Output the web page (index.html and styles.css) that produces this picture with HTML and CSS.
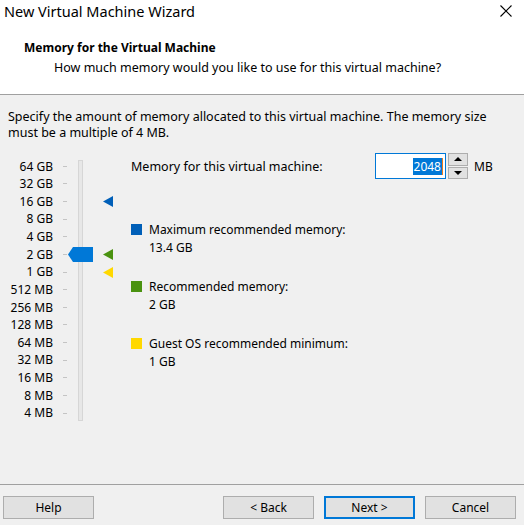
FILE: index.html
```html
<!DOCTYPE html>
<html lang="en">
<head>
    <meta charset="UTF-8">
    <title>New Virtual Machine Wizard</title>
    <link rel="stylesheet" href="styles.css">
</head>
<body>
    <div class="titlebar">
        <span class="title">New Virtual Machine Wizard</span>
        <svg class="close" width="12" height="12" viewBox="0 0 12 12">
            <path d="M0.5 0.5 L11.5 11.5 M11.5 0.5 L0.5 11.5" stroke="#000" stroke-width="1.1" fill="none"/>
        </svg>
    </div>

    <div class="header">
        <div class="heading">Memory for the Virtual Machine</div>
        <div class="subheading">How much memory would you like to use for this virtual machine?</div>
    </div>

    <div class="content">
        <p class="intro">Specify the amount of memory allocated to this virtual machine. The memory size<br>must be a multiple of 4 MB.</p>

        <div class="memory">
            <!-- scale on the left: labels, ticks, track, markers -->
            <div class="scale">
                <div class="track"></div>
                <svg class="thumb" width="25" height="15" viewBox="0 0 25 15">
                    <polygon points="0,7.5 5,0 25,0 25,15 5,15" fill="#0078d7"/>
                </svg>

                <span class="label r1">64 GB</span><span class="tick r1"></span>
                <span class="label r2">32 GB</span><span class="tick r2"></span>
                <span class="label r3">16 GB</span><span class="tick r3"></span>
                <span class="label r4">8 GB</span><span class="tick r4"></span>
                <span class="label r5">4 GB</span><span class="tick r5"></span>
                <span class="label r6">2 GB</span><span class="tick r6"></span>
                <span class="label r7">1 GB</span><span class="tick r7"></span>
                <span class="label r8">512 MB</span><span class="tick r8"></span>
                <span class="label r9">256 MB</span><span class="tick r9"></span>
                <span class="label r10">128 MB</span><span class="tick r10"></span>
                <span class="label r11">64 MB</span><span class="tick r11"></span>
                <span class="label r12">32 MB</span><span class="tick r12"></span>
                <span class="label r13">16 MB</span><span class="tick r13"></span>
                <span class="label r14">8 MB</span><span class="tick r14"></span>
                <span class="label r15">4 MB</span><span class="tick r15"></span>

                <svg class="marker r3" width="10" height="11" viewBox="0 0 10 11">
                    <polygon points="0,5.5 10,0 10,11" fill="#005fb8"/>
                </svg>
                <svg class="marker r6" width="10" height="11" viewBox="0 0 10 11">
                    <polygon points="0,5.5 10,0 10,11" fill="#4a9210"/>
                </svg>
                <svg class="marker r7" width="10" height="11" viewBox="0 0 10 11">
                    <polygon points="0,5.5 10,0 10,11" fill="#ffd800"/>
                </svg>
            </div>

            <div class="details">
                <div class="amount">
                    <span class="amount-label">Memory for this virtual machine:</span>
                    <div class="spinbox">
                        <div class="field"><span class="selected">2048</span><span class="caret"></span></div>
                        <div class="spin">
                            <div class="spin-btn"><span class="arrow up"></span></div>
                            <div class="spin-btn"><span class="arrow down"></span></div>
                        </div>
                    </div>
                    <span class="unit">MB</span>
                </div>

                <div class="legend">
                    <div class="legend-item">
                        <span class="swatch blue"></span>
                        <div class="legend-text">
                            <div>Maximum recommended memory:</div>
                            <div>13.4 GB</div>
                        </div>
                    </div>
                    <div class="legend-item">
                        <span class="swatch green"></span>
                        <div class="legend-text">
                            <div>Recommended memory:</div>
                            <div>2 GB</div>
                        </div>
                    </div>
                    <div class="legend-item">
                        <span class="swatch yellow"></span>
                        <div class="legend-text">
                            <div>Guest OS recommended minimum:</div>
                            <div>1 GB</div>
                        </div>
                    </div>
                </div>
            </div>
        </div>
    </div>

    <div class="footer">
        <button class="btn">Help</button>
        <div class="footer-right">
            <button class="btn">&lt; Back</button>
            <button class="btn btn-default">Next &gt;</button>
            <button class="btn">Cancel</button>
        </div>
    </div>
</body>
</html>
```

FILE: styles.css
```css
html, body {
    margin: 0;
    padding: 0;
}

body {
    width: 524px;
    height: 525px;
    overflow: hidden;
    display: flex;
    flex-direction: column;
    background-color: #f0f0f0;
    font-family: 'Noto Sans', 'Open Sans', sans-serif;
    font-size: 12px;
    color: #000;
}

.titlebar {
    height: 22px;
    display: flex;
    align-items: center;
    justify-content: space-between;
    padding: 0 12px 0 4px;
    background: white;
}

.title {
    font-size: 14.5px;
    line-height: 22px;
}

.close {
    display: block;
}

.header {
    background: white;
    height: 73px;
    box-sizing: border-box;
    padding-top: 18px;
    border-bottom: 1px solid #a0a0a0;
}

.heading {
    padding-left: 24px;
    font-weight: 700;
    line-height: 16px;
}

.subheading {
    padding-left: 54px;
    margin-top: 4px;
    font-size: 12.5px;
    line-height: 16px;
}

.content {
    padding: 14px 8px 0 8px;
}

.intro {
    margin: 0 0 12px 0;
    font-size: 12.5px;
    line-height: 16px;
}

.memory {
    display: flex;
    align-items: flex-start;
}

/* slider scale */
.scale {
    display: grid;
    grid-template-columns: 45px 15px 25px 22px;
    grid-template-rows: repeat(15, 17.64px);
    padding-top: 4.5px;
}

.label {
    grid-column: 1;
    text-align: right;
    line-height: 17.64px;
    white-space: nowrap;
}

.tick {
    grid-column: 2;
    align-self: center;
    justify-self: end;
    width: 4px;
    height: 1px;
    margin-right: 1px;
    background: #c4c4c4;
}

.track {
    grid-column: 3;
    grid-row: 1 / -1;
    justify-self: center;
    width: 3px;
    margin: 2px 0 1px 0;
    background: #e7e7e7;
    border: 1px solid #d6d6d6;
}

.thumb {
    grid-column: 3;
    grid-row: 6;
    align-self: center;
    display: block;
    z-index: 1;
}

.marker {
    grid-column: 4;
    align-self: center;
    justify-self: end;
    margin-right: 2px;
    display: block;
}

.r1 { grid-row: 1; }
.r2 { grid-row: 2; }
.r3 { grid-row: 3; }
.r4 { grid-row: 4; }
.r5 { grid-row: 5; }
.r6 { grid-row: 6; }
.r7 { grid-row: 7; }
.r8 { grid-row: 8; }
.r9 { grid-row: 9; }
.r10 { grid-row: 10; }
.r11 { grid-row: 11; }
.r12 { grid-row: 12; }
.r13 { grid-row: 13; }
.r14 { grid-row: 14; }
.r15 { grid-row: 15; }

/* right side */
.details {
    margin-left: 16px;
}

.amount {
    display: flex;
    align-items: center;
    height: 26px;
}

.amount-label {
    width: 244px;
    font-size: 12.5px;
}

.spinbox {
    display: flex;
    height: 26px;
}

.field {
    width: 67px;
    height: 24px;
    border: 1px solid #0078d7;
    background: white;
    display: flex;
    align-items: center;
    justify-content: flex-end;
    padding-right: 2px;
}

.selected {
    background: #0078d7;
    color: white;
    line-height: 17px;
    padding: 0 1px;
}

.caret {
    width: 1px;
    height: 17px;
    background: #f07a1a;
}

.spin {
    margin-left: 2px;
    width: 20px;
    display: flex;
    flex-direction: column;
    gap: 1px;
}

.spin-btn {
    flex: 1;
    background: #e1e1e1;
    border: 1px solid #adadad;
    display: flex;
    align-items: center;
    justify-content: center;
}

.arrow {
    width: 0;
    height: 0;
    border-left: 4px solid transparent;
    border-right: 4px solid transparent;
}

.arrow.up {
    border-bottom: 4px solid #000;
}

.arrow.down {
    border-top: 4px solid #000;
}

.unit {
    margin-left: 6px;
}

.legend {
    margin-top: 42px;
}

.legend-item {
    display: flex;
    align-items: flex-start;
    margin-bottom: 22px;
}

.legend-item:last-child {
    margin-bottom: 0;
}

.swatch {
    width: 11px;
    height: 11px;
    margin-top: 3px;
    margin-right: 7px;
    flex-shrink: 0;
}

.swatch.blue { background: #005fb8; }
.swatch.green { background: #4a9210; }
.swatch.yellow { background: #ffd800; }

.legend-text {
    line-height: 17.5px;
}

/* bottom buttons */
.footer {
    margin-top: auto;
    border-top: 1px solid #a0a0a0;
    padding: 11px 8px 6px 3px;
    display: flex;
    justify-content: space-between;
}

.footer-right {
    display: flex;
    gap: 10px;
}

.btn {
    width: 91px;
    height: 23px;
    background: #e1e1e1;
    border: 1px solid #adadad;
    font-family: inherit;
    font-size: 12px;
    color: #000;
    padding: 0;
}

.btn-default {
    border: 2px solid #0078d7;
}
```
